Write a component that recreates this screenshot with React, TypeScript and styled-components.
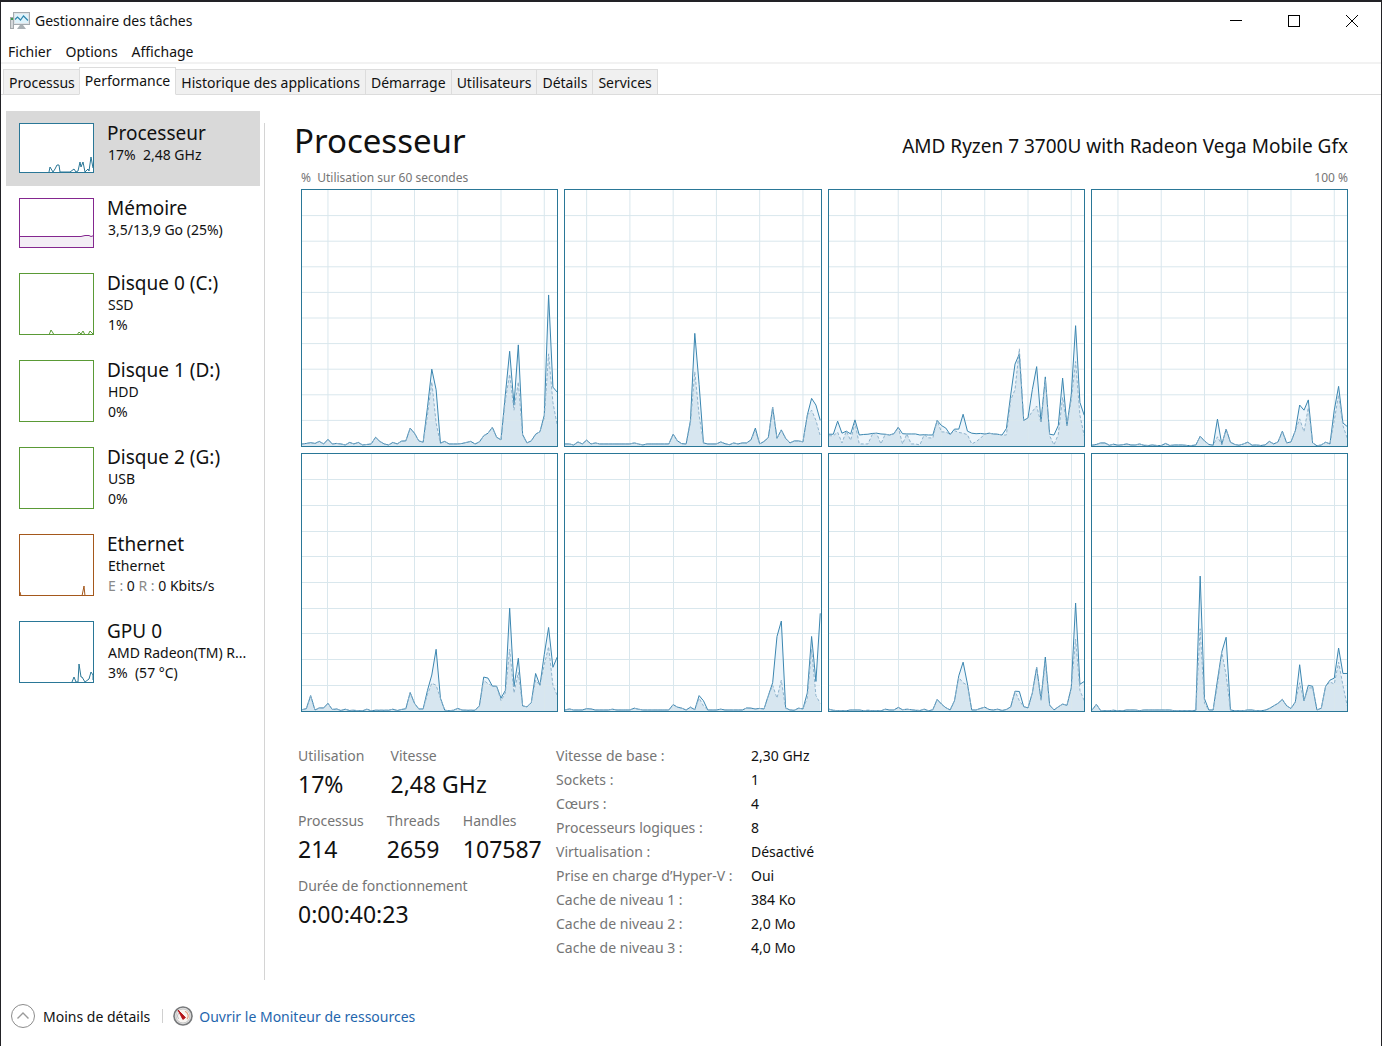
import React from "react";
import styled, { createGlobalStyle } from "styled-components";

const BLUE = "#2a7797";

const GlobalStyle = createGlobalStyle`
  * { box-sizing: border-box; }
  body {
    margin: 0;
    background: #ffffff;
    color: #111111;
    font-family: "Noto Sans", "Open Sans", sans-serif;
    font-size: 14px;
    line-height: 20px;
  }
  button {
    margin: 0;
    padding: 0;
    border: 0;
    background: none;
    color: inherit;
    font: inherit;
    text-align: left;
    white-space: nowrap;
  }
  svg { display: block; }
`;

const Window = styled.div`
  display: flex;
  flex-direction: column;
  min-height: 100vh;
  border: 1px solid #222226;
  border-top-width: 2px;
  border-bottom: 0;
`;

const TitleBar = styled.header`
  display: flex;
  align-items: center;
  height: 36px;
  padding: 2px 0 0 9px;
`;

const WindowTitle = styled.span`
  flex: 1;
  margin-left: 5px;
`;

const WindowButton = styled.button`
  display: flex;
  align-items: center;
  justify-content: center;
  width: 58px;
  height: 34px;
`;

const MenuBar = styled.nav`
  display: flex;
  gap: 14px;
  height: 26px;
  padding-left: 7px;
  border-bottom: 2px solid #f2f2f2;
  line-height: 28px;
`;

const TabStrip = styled.div`
  display: flex;
  align-items: flex-end;
  height: 31px;
  padding-left: 2px;
  box-shadow: inset 0 -1px 0 #dcdcdc;
`;

const Tab = styled.button<{ $active?: boolean }>`
  height: ${(p) => (p.$active ? 28 : 26)}px;
  padding: ${(p) => (p.$active ? 0 : 2)}px 5px 0;
  border: 1px solid #dcdcdc;
  border-left-width: ${(p) => (p.$active ? 1 : 0)}px;
  border-bottom-color: ${(p) => (p.$active ? "#ffffff" : "#dcdcdc")};
  background: ${(p) => (p.$active ? "#ffffff" : "#f0f0f0")};

  &:first-child {
    padding-right: 4px;
    border-left-width: 1px;
    border-right-width: 0;
  }
`;

const Body = styled.div`
  display: flex;
  flex: 1;
  padding: 16px 32px 6px 5px;
`;

const Sidebar = styled.nav`
  flex: none;
  width: 254px;
`;

const Divider = styled.div`
  flex: none;
  width: 1px;
  margin: 12px 31px 0 4px;
  background: #d4d4d4;
`;

const SideItem = styled.button<{ $selected?: boolean }>`
  display: flex;
  gap: 13px;
  width: 100%;
  padding: 12px 8px 13px 13px;
  background: ${(p) => (p.$selected ? "#d9d9d9" : "transparent")};
`;

const Thumb = styled.svg<{ $color: string }>`
  flex: none;
  border: 1px solid ${(p) => p.$color};
  background: #ffffff;
  stroke: ${(p) => p.$color};
`;

const SideText = styled.span`
  display: flex;
  flex-direction: column;
`;

const SideTitle = styled.span`
  margin-bottom: 2px;
  font-size: 19px;
  line-height: 20px;
`;

const SideLine = styled.span`
  padding-left: 1px;
  white-space: pre;
`;

const Muted = styled.span`
  color: #8a8a8a;
`;

const Main = styled.main`
  flex: 1;
  min-width: 0;
  padding-top: 8px;
`;

const Heading = styled.div`
  display: flex;
  align-items: baseline;
  justify-content: space-between;
  margin-right: 1px;
`;

const Title = styled.h1`
  margin: 0 0 0 -2px;
  font-size: 33px;
  font-weight: 400;
  line-height: 44px;
`;

const Model = styled.span`
  font-size: 19px;
`;

const ChartLabels = styled.div`
  display: flex;
  justify-content: space-between;
  margin: 5px 1px 1px 5px;
  color: #757575;
  font-size: 12px;
  white-space: pre;
`;

const ChartGrid = styled.div`
  display: grid;
  grid-template-columns: repeat(4, 1fr);
  grid-template-rows: 258px 259px;
  gap: 6px;
  margin: 0 1px 0 5px;
`;

const ChartSvg = styled.svg`
  width: 100%;
  height: 100%;
  border: 1px solid ${BLUE};

  path { vector-effect: non-scaling-stroke; fill: none; }
  .grid { stroke: #d9e7ed; shape-rendering: crispEdges; }
  .total-area { fill: #edf5fb; }
  .kernel-area { fill: #d7e6f0; }
  .kernel { stroke: #8fb3cc; stroke-dasharray: 3 2; }
  .total { stroke: #3a86b0; }
`;

const Details = styled.div`
  display: flex;
  margin: 32px 0 0 2px;
  line-height: 24px;
`;

const Stats = styled.div`
  display: flex;
  flex-direction: column;
  flex: none;
  gap: 9px;
  width: 258px;
`;

const StatRow = styled.div<{ $gap: number }>`
  display: flex;
  gap: ${(p) => p.$gap}px;
`;

const Stat = styled.div`
  display: flex;
  flex-direction: column;
`;

const Label = styled.span`
  color: #757575;
`;

const Value = styled.span`
  font-size: 23px;
  line-height: 32px;
`;

const Specs = styled.dl`
  display: grid;
  grid-template-columns: 195px auto;
  margin: 0;

  dt { color: #757575; }
  dd { margin: 0; }
`;

const Footer = styled.footer`
  display: flex;
  align-items: center;
  height: 60px;
  padding-left: 10px;
`;

const FooterButton = styled.button`
  display: flex;
  align-items: center;
  gap: 8px;
`;

const Separator = styled.span`
  width: 1px;
  height: 14px;
  margin: 0 10px 0 12px;
  background: #d0d0d0;
`;

const MonitorLink = styled.a`
  display: flex;
  align-items: center;
  gap: 6px;
  color: #1f66ad;
  text-decoration: none;
`;

const FooterText = styled.span`
  padding-top: 2px;
`;

type Core = { gridStart: number; total: number[]; kernel: Record<number, number> };

const cores: Core[] = [
  {
    gridStart: 6,
    total: [
      0.8, 1, 1.3, 1, 1.8, 0.8, 2.6, 0.8, 1, 0.8, 0.4, 1.4, 0.8, 1.4, 0.4, 0.6, 0.8, 3.4, 1.8, 0.8,
      0.4, 1.4, 0.8, 1.9, 2, 7, 5, 2, 1.5, 15, 30, 22, 1.2, 1.8, 0.8, 0.8, 0.8, 1, 1.4, 1.8,
      0.8, 1.6, 4, 5, 7.3, 3.4, 2.4, 20, 37, 16, 39.5, 4.5, 1.2, 2, 4.6, 5.6, 12, 59, 23, 21,
    ],
    kernel: { 29: 12, 30: 25, 31: 9, 32: 1, 47: 18, 48: 28, 49: 14, 50: 25, 51: 4, 56: 11, 57: 36, 58: 17, 59: 8 },
  },
  {
    gridStart: 5,
    total: [
      0.8, 0.8, 0.4, 1.6, 0.8, 2.3, 0.8, 1.2, 0.8, 0.8, 0.8, 0.8, 0.8, 0.8, 0.8, 0.8, 1.2, 0.8, 0.4, 0.8,
      0.8, 0.8, 0.8, 0.8, 0.8, 4.6, 2, 0.9, 0.8, 10, 44, 24, 1.2, 0.8, 0.8, 0.8, 1.6, 0.9, 0.5, 1.2,
      0.8, 1.2, 1.2, 2.4, 7, 0.8, 1.8, 3.3, 15.2, 3, 6.3, 3, 1.2, 2, 2, 1.6, 12, 18.6, 16, 10,
    ],
    kernel: { 29: 9, 30: 29, 31: 12, 44: 6, 57: 14, 58: 10, 59: 4 },
  },
  {
    gridStart: 6,
    total: [
      4.6, 4.6, 9.7, 5, 5.8, 4.7, 10.2, 4.3, 4.5, 4.6, 4.9, 5, 4.7, 4.6, 4.3, 4.8, 7.3, 4.8, 4.7, 4.7,
      4.7, 4.3, 4.4, 4.3, 4.3, 10, 8, 7, 4.5, 6.6, 6.6, 12.4, 5.8, 5, 4.8, 4.9, 4.7, 5, 4.7, 4.6,
      4.3, 6.8, 20, 32, 36, 10, 11, 22, 31, 9.5, 27, 4.6, 4.3, 8, 26.5, 8, 20, 47, 17, 12,
    ],
    kernel: {
      0: 4, 1: 4, 2: 5.4, 3: 1.2, 5: 2.2, 6: 9, 7: 0.8, 8: 0.8, 9: 0.8, 10: 4.5, 12: 0.8, 17: 0.8, 19: 0.8,
      20: 0.8, 21: 0.4, 23: 3.2, 24: 3.1, 26: 5.5, 27: 5.5, 29: 6, 30: 5.3, 31: 5, 32: 4.4, 33: 0.8, 34: 1.7,
      35: 3, 41: 4.3, 42: 18, 43: 22, 44: 38, 47: 13.5, 48: 15.6, 49: 9, 50: 26, 51: 4, 52: 0.4, 53: 4.5,
      54: 19, 56: 18, 57: 33, 58: 12, 59: 4,
    },
  },
  {
    gridStart: 6,
    total: [
      0.3, 0.6, 1.2, 1.2, 0.3, 0.7, 0.3, 0.5, 0.8, 0.4, 0.4, 0.8, 0.3, 0.2, 0.4, 0.2, 0.2, 1, 0.2, 0.4,
      0.4, 0.4, 0.2, 0.2, 0.4, 3.8, 2, 0.6, 0.3, 10.5, 0.6, 6.6, 1.5, 0.6, 0.3, 0.8, 1.5, 0.3, 0.4, 0.2,
      0.4, 1.8, 0.8, 1.6, 5.8, 1.2, 1.6, 6, 16, 14, 18, 1.2, 0.1, 0.4, 1.5, 0.8, 14, 23.3, 9, 7.6,
    ],
    kernel: { 29: 3.6, 48: 10.6, 49: 5.6, 50: 15, 56: 10, 57: 20, 58: 8, 59: 3 },
  },
  {
    gridStart: 6,
    total: [
      0.5, 0.9, 6, 0.4, 1.2, 1.2, 3, 0.6, 0.8, 0.2, 0.7, 0.2, 0.3, 0.1, 0.1, 0.7, 0.1, 0.3, 0.3, 0.3,
      0.3, 0.7, 0.2, 0.6, 0.9, 7.2, 3, 0.8, 0.8, 8, 14, 24, 5, 0.3, 0.1, 0.3, 1, 0.4, 0.3, 0.3,
      0.3, 2, 13.2, 12.8, 9.7, 9.6, 5, 8, 40, 9.5, 20.5, 2, 1.6, 3.3, 14.6, 10, 22, 32.5, 17, 21,
    ],
    kernel: { 29: 6.5, 30: 10.8, 31: 10, 42: 12, 43: 10.6, 46: 4, 47: 7, 48: 24, 49: 7, 50: 15, 54: 12, 56: 18, 57: 25, 58: 10, 59: 6 },
  },
  {
    gridStart: 5,
    total: [
      0.4, 0.8, 0.4, 0.4, 0.4, 0.9, 0.8, 0.4, 0.4, 0.4, 0.4, 0.7, 0.4, 0.4, 0.4, 0.4, 1.1, 0.7, 0.4, 0.4,
      0.4, 0.4, 0.4, 0.4, 0.4, 2.5, 1.5, 1.1, 0.4, 1.5, 0.5, 6, 4, 0.4, 0.4, 0.4, 0.7, 0.4, 0.4, 0.4,
      0.4, 0.4, 1.2, 1.1, 0.8, 1, 0.8, 6, 11, 29, 35, 1.2, 0.4, 0.3, 1.1, 0.8, 7, 29, 11.5, 38,
    ],
    kernel: { 31: 5, 32: 2, 48: 10, 49: 5, 50: 12, 51: 1, 56: 5, 57: 24, 58: 6, 59: 3 },
  },
  {
    gridStart: 6,
    total: [
      0.7, 0.3, 0.1, 0.1, 0.1, 0.4, 0.4, 0.4, 0.1, 0.3, 0.1, 0.1, 0.1, 0.7, 0.4, 0.4, 1.4, 0.5, 0.7, 0.5,
      0.3, 0.2, 0.7, 0.1, 0.5, 4.5, 2.7, 1.3, 0.4, 4, 13.7, 19, 10.5, 0.4, 0.4, 1, 1.5, 0.6, 0.4, 0.7,
      0.2, 0.6, 1.6, 7.7, 7.6, 1.7, 1.2, 7, 17, 4.5, 21, 2.3, 0.4, 1.6, 2.7, 2.2, 9, 42, 10.4, 11.5,
    ],
    kernel: { 30: 13, 31: 11, 32: 10, 44: 4, 49: 4, 50: 19, 57: 28, 58: 8, 59: 4 },
  },
  {
    gridStart: 6,
    total: [
      0.3, 2.6, 0.2, 0.1, 0.1, 0.3, 0.1, 0.1, 0.4, 0.4, 0.4, 0.1, 0.4, 0.4, 0.4, 0.4, 0.4, 0.4, 0.4, 0.1,
      0.1, 0.1, 0.1, 0.1, 0.3, 52.5, 4.8, 0.4, 0.4, 12, 23, 28.7, 0.4, 0.1, 0.1, 0.1, 0.4, 0.4, 0.1, 0.1,
      0.3, 1, 2, 3, 4.5, 2, 1, 3.5, 18, 4, 10, 9.6, 0.4, 1.1, 9.6, 12, 12.8, 24.5, 14.6, 14.6,
    ],
    kernel: { 25: 32, 26: 3, 29: 10, 31: 14, 48: 11, 50: 9, 51: 9, 55: 11.3, 56: 10.5, 57: 19, 58: 10, 59: 2 },
  },
];

const toLine = (values: number[]) =>
  values.map((v, i) => `${i ? "L" : "M"}${i} ${100 - v}`).join("");

function CoreChart({ core, name }: { core: Core; name: string }) {
  const total = toLine(core.total);
  const kernel = toLine(core.total.map((v, i) => core.kernel[i] ?? v));
  const rows = [10, 20, 30, 40, 50, 60, 70, 80, 90].map((y) => `M0 ${y}H59`).join("");
  const cols = [0, 1, 2, 3, 4, 5].map((k) => `M${core.gridStart + k * 10} 0V100`).join("");
  return (
    <ChartSvg viewBox="0 0 59 100" preserveAspectRatio="none" role="img" aria-label={name}>
      <path className="total-area" d={`${total}V100H0Z`} />
      <path className="kernel-area" d={`${kernel}V100H0Z`} />
      <path className="grid" d={rows + cols} />
      <path className="total" d={total} />
      <path className="kernel" d={kernel} />
    </ChartSvg>
  );
}

type Device = {
  title: string;
  lines: React.ReactNode[];
  color: string;
  points: string;
  fill?: string;
};

const devices: Device[] = [
  {
    title: "Processeur",
    lines: ["17%  2,48 GHz"],
    color: BLUE,
    points: "29,48 30,43 33,48 35,45 37,41 39,41 40,48 50,48 54,45 56,48 58,47 60,38 61,43 63,38 65,48 68,45 69,47 71,33 73,44",
  },
  {
    title: "Mémoire",
    lines: ["3,5/13,9 Go (25%)"],
    color: "#84278f",
    points: "-1,49 -1,37.5 61,37.5 65,36.5 69,36.5 71,37.5 74,36.5 74,49",
    fill: "#f3eef5",
  },
  {
    title: "Disque 0 (C:)",
    lines: ["SSD", "1%"],
    color: "#5a9a36",
    points: "29,61 31,56 33,59 34,61 57,61 59,58 61,60 63,57 65,61 68,61 70,57 73,60",
  },
  { title: "Disque 1 (D:)", lines: ["HDD", "0%"], color: "#5a9a36", points: "" },
  { title: "Disque 2 (G:)", lines: ["USB", "0%"], color: "#5a9a36", points: "" },
  {
    title: "Ethernet",
    lines: [
      "Ethernet",
      <>
        <Muted>E :</Muted> 0 <Muted>R :</Muted> 0 Kbits/s
      </>,
    ],
    color: "#a4581c",
    points: "0,57 1,61 62,61 64,51 65,61",
  },
  {
    title: "GPU 0",
    lines: ["AMD Radeon(TM) R...", "3%  (57 °C)"],
    color: BLUE,
    points: "52,60 54,55 56,60 58,60 59,42 61,55 62,55 65,60 69,57 71,50 73,53 73,58",
  },
];

function DeviceItem({ device, selected }: { device: Device; selected: boolean }) {
  const height = device.lines.length > 1 ? 62 : 50;
  return (
    <SideItem $selected={selected}>
      <Thumb $color={device.color} width={75} height={height} viewBox={`0 0 73 ${height - 2}`}>
        <polyline points={device.points} fill={device.fill ?? "none"} />
      </Thumb>
      <SideText>
        <SideTitle>{device.title}</SideTitle>
        {device.lines.map((line, i) => (
          <SideLine key={i}>{line}</SideLine>
        ))}
      </SideText>
    </SideItem>
  );
}

const stats = [
  { gap: 26, items: [["Utilisation", "17%"], ["Vitesse", "2,48 GHz"]] },
  { gap: 23, items: [["Processus", "214"], ["Threads", "2659"], ["Handles", "107587"]] },
  { gap: 23, items: [["Durée de fonctionnement", "0:00:40:23"]] },
];

const specs = [
  ["Vitesse de base :", "2,30 GHz"],
  ["Sockets :", "1"],
  ["Cœurs :", "4"],
  ["Processeurs logiques :", "8"],
  ["Virtualisation :", "Désactivé"],
  ["Prise en charge d’Hyper-V :", "Oui"],
  ["Cache de niveau 1 :", "384 Ko"],
  ["Cache de niveau 2 :", "2,0 Mo"],
  ["Cache de niveau 3 :", "4,0 Mo"],
];

const tabs = [
  "Processus",
  "Performance",
  "Historique des applications",
  "Démarrage",
  "Utilisateurs",
  "Détails",
  "Services",
];

const TaskManagerIcon = () => (
  <svg width="20" height="18" viewBox="0 0 20 18">
    <rect x="0.5" y="5.5" width="3" height="11" fill="#d5d8da" stroke="#a3a8ab" />
    <rect x="1" y="6" width="2" height="2" fill="#3f9a4e" />
    <rect x="3.5" y="0.5" width="16" height="12" fill="#dfe3e6" stroke="#a3abb0" />
    <rect x="5" y="2" width="13" height="9" fill="#dff3fb" />
    <path d="M5 7.5l2.5-2.5 3 3 3-4 4.5 4.5" fill="none" stroke="#2f86ad" strokeWidth="1.2" />
    <path d="M10 13h3l3 4H7z" fill="#a9b0b4" />
  </svg>
);

const GaugeIcon = () => (
  <svg width="20" height="20" viewBox="0 0 20 20">
    <circle cx="10" cy="10" r="9" fill="#e6e6e6" stroke="#77797b" strokeWidth="1.6" />
    <circle cx="10" cy="10" r="7" fill="#f8f5f2" stroke="#b9b9b9" strokeWidth="0.8" />
    <path d="M5.5 13a5.2 5.2 0 0 1 0-6" fill="none" stroke="#b8bcc0" />
    <path d="M12 5.2a5.2 5.2 0 0 1 2 8" fill="none" stroke="#e0a184" strokeWidth="1.2" />
    <path d="M5 4l7.4 7.6-2.5 1.8z" fill="#b5161c" stroke="#b5161c" strokeLinejoin="round" />
  </svg>
);

export default function App() {
  return (
    <>
      <GlobalStyle />
      <Window>
        <TitleBar>
          <TaskManagerIcon />
          <WindowTitle>Gestionnaire des tâches</WindowTitle>
          <WindowButton aria-label="Réduire">
            <svg width="12" height="12" viewBox="0 0 12 12" stroke="#000">
              <path d="M0 5.5h12" />
            </svg>
          </WindowButton>
          <WindowButton aria-label="Agrandir">
            <svg width="12" height="12" viewBox="0 0 12 12" stroke="#000" fill="none">
              <rect x="0.5" y="0.5" width="11" height="11" />
            </svg>
          </WindowButton>
          <WindowButton aria-label="Fermer">
            <svg width="12" height="12" viewBox="0 0 12 12" stroke="#000">
              <path d="M0 0l12 12M12 0L0 12" />
            </svg>
          </WindowButton>
        </TitleBar>
        <MenuBar>
          <button>Fichier</button>
          <button>Options</button>
          <button>Affichage</button>
        </MenuBar>
        <TabStrip role="tablist">
          {tabs.map((tab) => (
            <Tab key={tab} role="tab" aria-selected={tab === "Performance"} $active={tab === "Performance"}>
              {tab}
            </Tab>
          ))}
        </TabStrip>
        <Body>
          <Sidebar>
            {devices.map((device, i) => (
              <DeviceItem key={device.title} device={device} selected={i === 0} />
            ))}
          </Sidebar>
          <Divider />
          <Main>
            <Heading>
              <Title>Processeur</Title>
              <Model>AMD Ryzen 7 3700U with Radeon Vega Mobile Gfx</Model>
            </Heading>
            <ChartLabels>
              <span>%  Utilisation sur 60 secondes</span>
              <span>100 %</span>
            </ChartLabels>
            <ChartGrid>
              {cores.map((core, i) => (
                <CoreChart key={i} core={core} name={`Processeur logique ${i}`} />
              ))}
            </ChartGrid>
            <Details>
              <Stats>
                {stats.map((row, i) => (
                  <StatRow key={i} $gap={row.gap}>
                    {row.items.map(([label, value]) => (
                      <Stat key={label}>
                        <Label>{label}</Label>
                        <Value>{value}</Value>
                      </Stat>
                    ))}
                  </StatRow>
                ))}
              </Stats>
              <Specs>
                {specs.map(([label, value]) => (
                  <React.Fragment key={label}>
                    <dt>{label}</dt>
                    <dd>{value}</dd>
                  </React.Fragment>
                ))}
              </Specs>
            </Details>
          </Main>
        </Body>
        <Footer>
          <FooterButton>
            <svg width="24" height="24" viewBox="0 0 24 24" fill="none">
              <circle cx="12" cy="12" r="11.5" stroke="#8c8c8c" />
              <path d="M6.5 14.5L12 9l5.5 5.5" stroke="#9a9a9a" strokeWidth="1.4" />
            </svg>
            <FooterText>Moins de détails</FooterText>
          </FooterButton>
          <Separator />
          <MonitorLink href="#moniteur">
            <GaugeIcon />
            <FooterText>Ouvrir le Moniteur de ressources</FooterText>
          </MonitorLink>
        </Footer>
      </Window>
    </>
  );
}
